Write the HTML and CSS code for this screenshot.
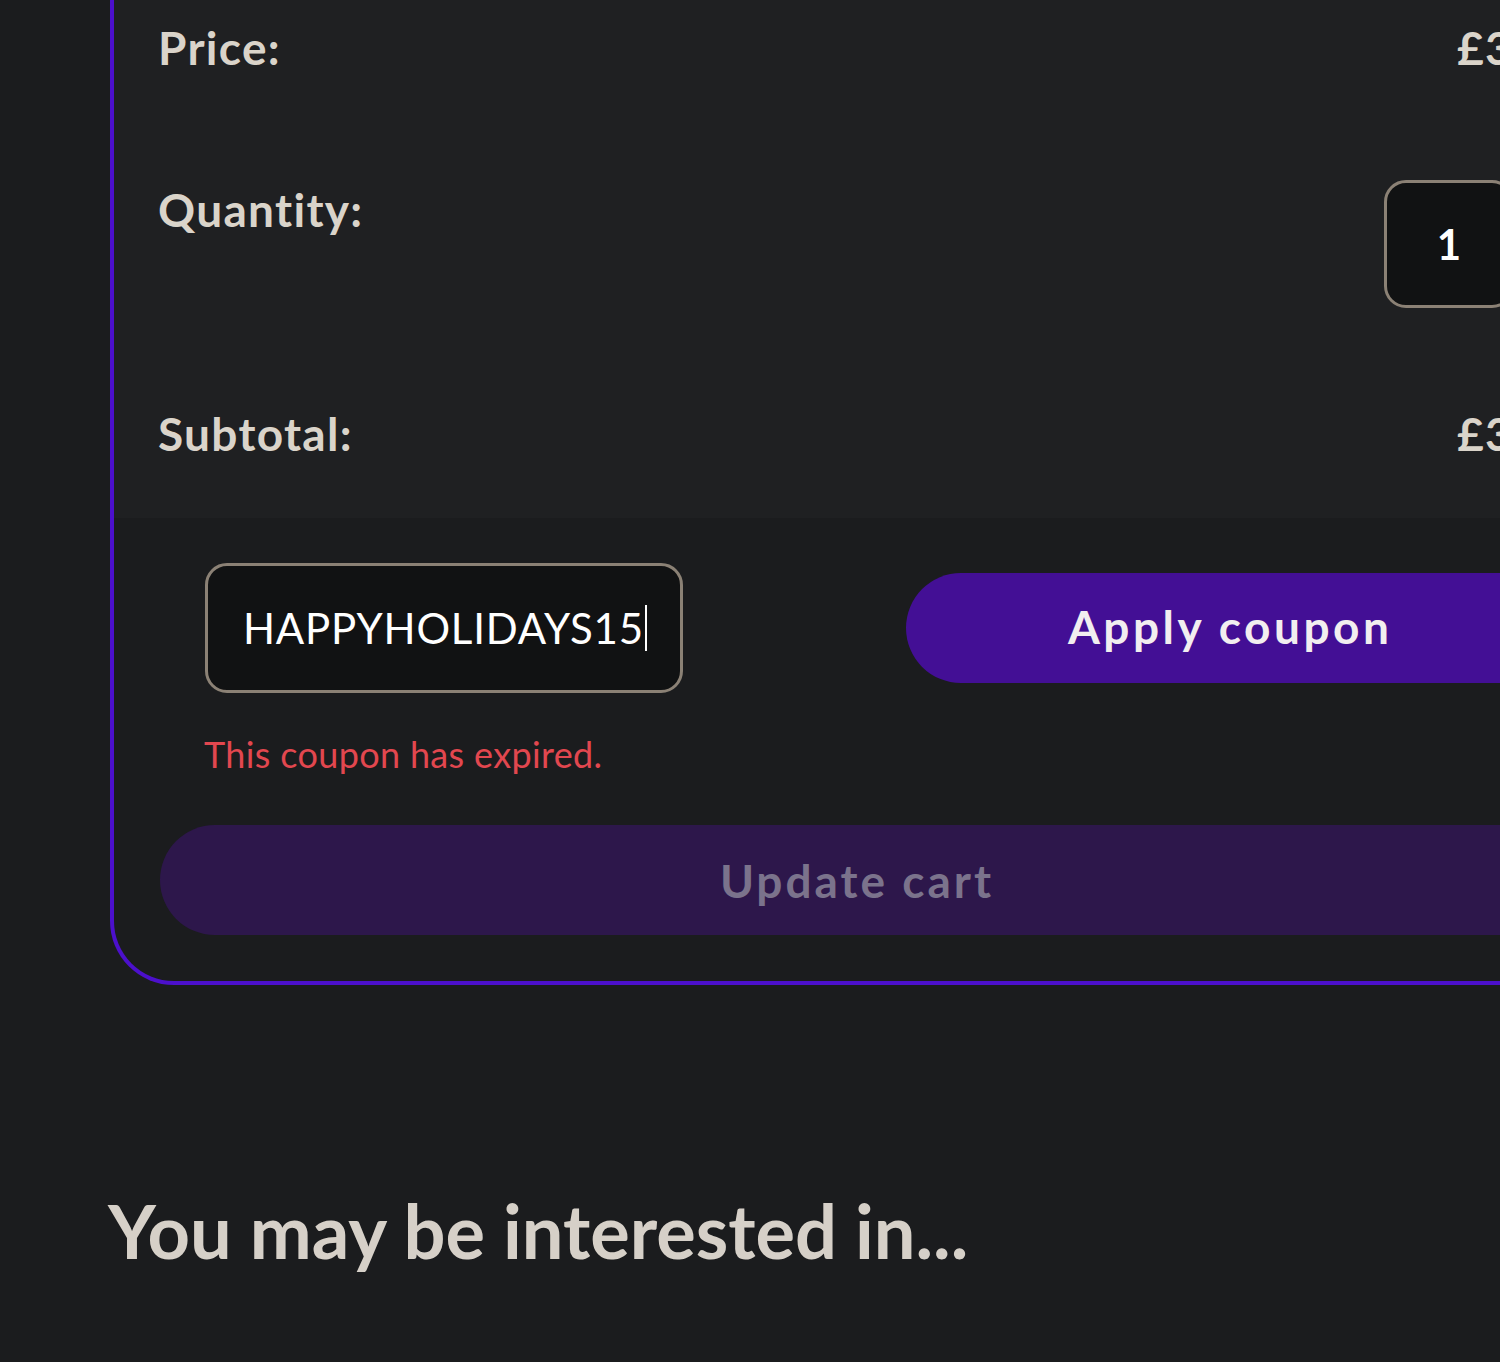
FILE: index.html
```html
<!DOCTYPE html>
<html lang="en">
<head>
<meta charset="utf-8">
<title>Cart</title>
<link rel="stylesheet" href="styles.css">
</head>
<body>
<main class="page">
  <section class="card">
    <div class="card-rows">
      <div class="row row-price">
        <span class="label">Price:</span>
        <span class="value">£39.99</span>
      </div>
      <div class="row row-qty">
        <span class="label">Quantity:</span>
        <div class="value"><span class="qty-box">1</span></div>
      </div>
      <div class="row row-subtotal">
        <span class="label">Subtotal:</span>
        <span class="value">£39.99</span>
      </div>
    </div>
    <div class="card-actions">
      <div class="coupon">
        <div class="coupon-row">
          <div class="coupon-input"><span class="coupon-text">HAPPYHOLIDAYS15</span><span class="caret"></span></div>
          <button class="btn btn-apply" type="button">Apply coupon</button>
        </div>
        <p class="coupon-error">This coupon has expired.</p>
      </div>
      <button class="btn btn-update" type="button">Update cart</button>
    </div>
  </section>
  <h2 class="related-title">You may be interested in...</h2>
</main>
</body>
</html>
```

FILE: styles.css
```css
html, body {
  margin: 0;
  padding: 0;
  background: #1b1c1e;
  overflow: hidden;
}

body {
  font-family: "Lato", "Open Sans", sans-serif;
  color: #dad4ca;
  width: 1500px;
  height: 1362px;
}

.page {
  width: 1500px;
  overflow: hidden;
}

.card {
  margin-left: 110px;
  width: 1486px;
  border: 4px solid #4c10cc;
  border-top: 0;
  border-radius: 0 0 64px 64px;
  overflow: hidden;
  background: #1b1c1e;
}

.card-rows {
  background: #1f2022;
  padding: 22px 46px 58px;
  display: flex;
  flex-direction: column;
}

.row {
  display: grid;
  grid-template-columns: 1fr 170px;
  align-items: start;
}

.row-qty {
  margin-top: 106px;
}

.row-qty .label {
  margin-top: 4px;
}

.row-subtotal {
  margin-top: 100px;
}

.label {
  font-weight: 700;
  font-size: 46px;
  line-height: 52px;
  letter-spacing: 1.3px;
  margin-left: -2px;
  color: #dad4ca;
}

.row-price .value,
.row-subtotal .value {
  font-weight: 700;
  font-size: 46px;
  line-height: 52px;
  letter-spacing: 1.3px;
  padding-left: 73px;
  white-space: nowrap;
  color: #dad4ca;
}

.qty-box {
  display: flex;
  align-items: center;
  justify-content: center;
  box-sizing: border-box;
  width: 130px;
  height: 128px;
  border: 3px solid #8b8175;
  border-radius: 22px;
  background: #111213;
  color: #ffffff;
  font-weight: 700;
  font-size: 42px;
}

.card-actions {
  padding: 45px 46px 46px;
}

.coupon {
  padding-left: 45px;
}

.coupon-row {
  display: flex;
  align-items: center;
}

.coupon-input {
  box-sizing: border-box;
  width: 480px;
  height: 130px;
  border: 3px solid #8b8175;
  border-radius: 22px;
  background: #111213;
  display: flex;
  align-items: center;
  padding-left: 35px;
}

.coupon-text {
  color: #ffffff;
  font-size: 42px;
  font-weight: 400;
  letter-spacing: 0.8px;
}

.caret {
  display: inline-block;
  width: 2px;
  height: 46px;
  background: #ffffff;
  margin-left: 1px;
}

.btn {
  border: 0;
  font-family: "Lato", "Open Sans", sans-serif;
  font-weight: 700;
  font-size: 46px;
  letter-spacing: 3px;
  height: 110px;
  border-radius: 55px;
  cursor: pointer;
  padding: 0;
}

.btn-apply {
  margin-left: 223px;
  width: 650px;
  background: #430f95;
  color: #f2eef0;
  letter-spacing: 3.5px;
  padding-bottom: 4px;
}

.coupon-error {
  margin: 40px 0 0;
  color: #e2474f;
  font-size: 36px;
  line-height: 42px;
  letter-spacing: 0.35px;
  margin-left: -1px;
}

.btn-update {
  display: block;
  margin-top: 50px;
  width: 1394px;
  background: #2d174b;
  color: #7b738c;
}

.related-title {
  margin: 201px 0 0 108px;
  font-size: 74px;
  line-height: 89px;
  font-weight: 700;
  color: #d6d0c8;
}
```
